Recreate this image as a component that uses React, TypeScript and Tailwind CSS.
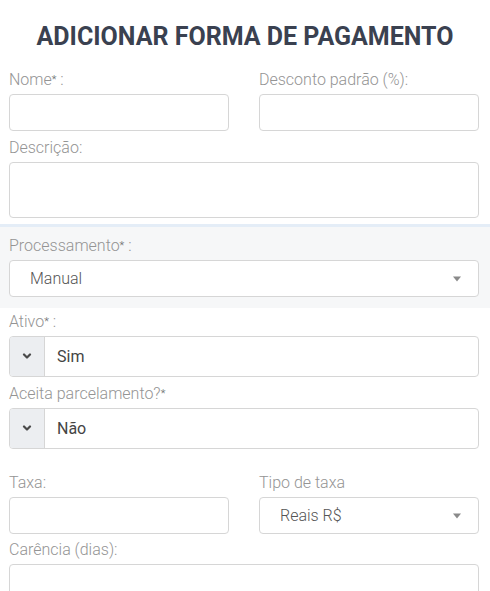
import React from "react";

const font = { fontFamily: "Roboto, 'Noto Sans', Arial, sans-serif" };

function Label({ text, star, colon = true }: { text: string; star?: boolean; colon?: boolean }) {
  return (
    <div className="mb-[5px] h-[19px] whitespace-nowrap text-[16px] font-light leading-[19px] text-[#949494]">
      {text}
      {star && <sup className="relative top-[-2px] text-[11px] text-[#666]">*</sup>}
      {colon && (star ? " :" : ":")}
    </div>
  );
}

function Caret() {
  return (
    <svg width="10" height="6" viewBox="0 0 10 6" className="shrink-0">
      <path d="M1 0.5 L9 0.5 L5 5.5 Z" fill="#8a8a8a" />
    </svg>
  );
}

function Chevron() {
  return (
    <svg width="10" height="7" viewBox="0 0 10 7">
      <path d="M2 1.5 L5 4.5 L8 1.5" stroke="#4a4a4a" strokeWidth="2.2" fill="none" strokeLinecap="round" strokeLinejoin="round" />
    </svg>
  );
}

function Input({ h = 37 }: { h?: number }) {
  return <div className="w-full rounded-[4px] border border-[#d6d6d6] bg-white" style={{ height: h }} />;
}

function Select({ value }: { value: string }) {
  return (
    <div className="flex h-[37px] w-full items-center justify-between rounded-[4px] border border-[#d6d6d6] bg-white pl-[20px] pr-[16px]">
      <span className="text-[16px] font-light text-[#555]">{value}</span>
      <Caret />
    </div>
  );
}

function ToggleGroup({ value }: { value: string }) {
  return (
    <div className="flex h-[41px] w-full overflow-hidden rounded-[4px] border border-[#d6d6d6] bg-white">
      <div className="flex w-[35px] items-center justify-center border-r border-[#d6d6d6] bg-[#eceef1]">
        <Chevron />
      </div>
      <div className="flex items-center pl-[12px] text-[16px] text-[#444]">{value}</div>
    </div>
  );
}

export default function App() {
  return (
    <div className="h-[591px] w-[490px] overflow-hidden bg-white" style={font}>
      <h1 className="pt-[21px] text-center text-[25px] font-bold leading-[32px] text-[#3a4150]">
        ADICIONAR FORMA DE PAGAMENTO
      </h1>
      <div className="pl-[9px] pr-[11px] pt-[17px]">
        <div className="grid grid-cols-2 gap-[30px]">
          <div>
            <Label text="Nome" star />
            <Input />
          </div>
          <div>
            <Label text="Desconto padrão (%)" />
            <Input />
          </div>
        </div>
        <div className="mt-[7px]">
          <Label text="Descrição" />
          <Input h={56} />
        </div>
      </div>

      <div className="mt-[6px] border-t-[3px] border-[#e4edf7] bg-[#f6f7f8] pb-[11px] pl-[9px] pr-[11px] pt-[9px]">
        <Label text="Processamento" star />
        <Select value="Manual" />
      </div>

      <div className="pl-[9px] pr-[11px] pt-[4px]">
        <Label text="Ativo" star />
        <ToggleGroup value="Sim" />
        <div className="mt-[7px]">
          <Label text="Aceita parcelamento?" star colon={false} />
          <ToggleGroup value="Não" />
        </div>
        <div className="mt-[24px] grid grid-cols-2 gap-[30px]">
          <div>
            <Label text="Taxa" />
            <Input />
          </div>
          <div>
            <Label text="Tipo de taxa" colon={false} />
            <Select value="Reais R$" />
          </div>
        </div>
        <div className="mt-[6px]">
          <Label text="Carência (dias)" />
          <Input />
        </div>
      </div>
    </div>
  );
}
